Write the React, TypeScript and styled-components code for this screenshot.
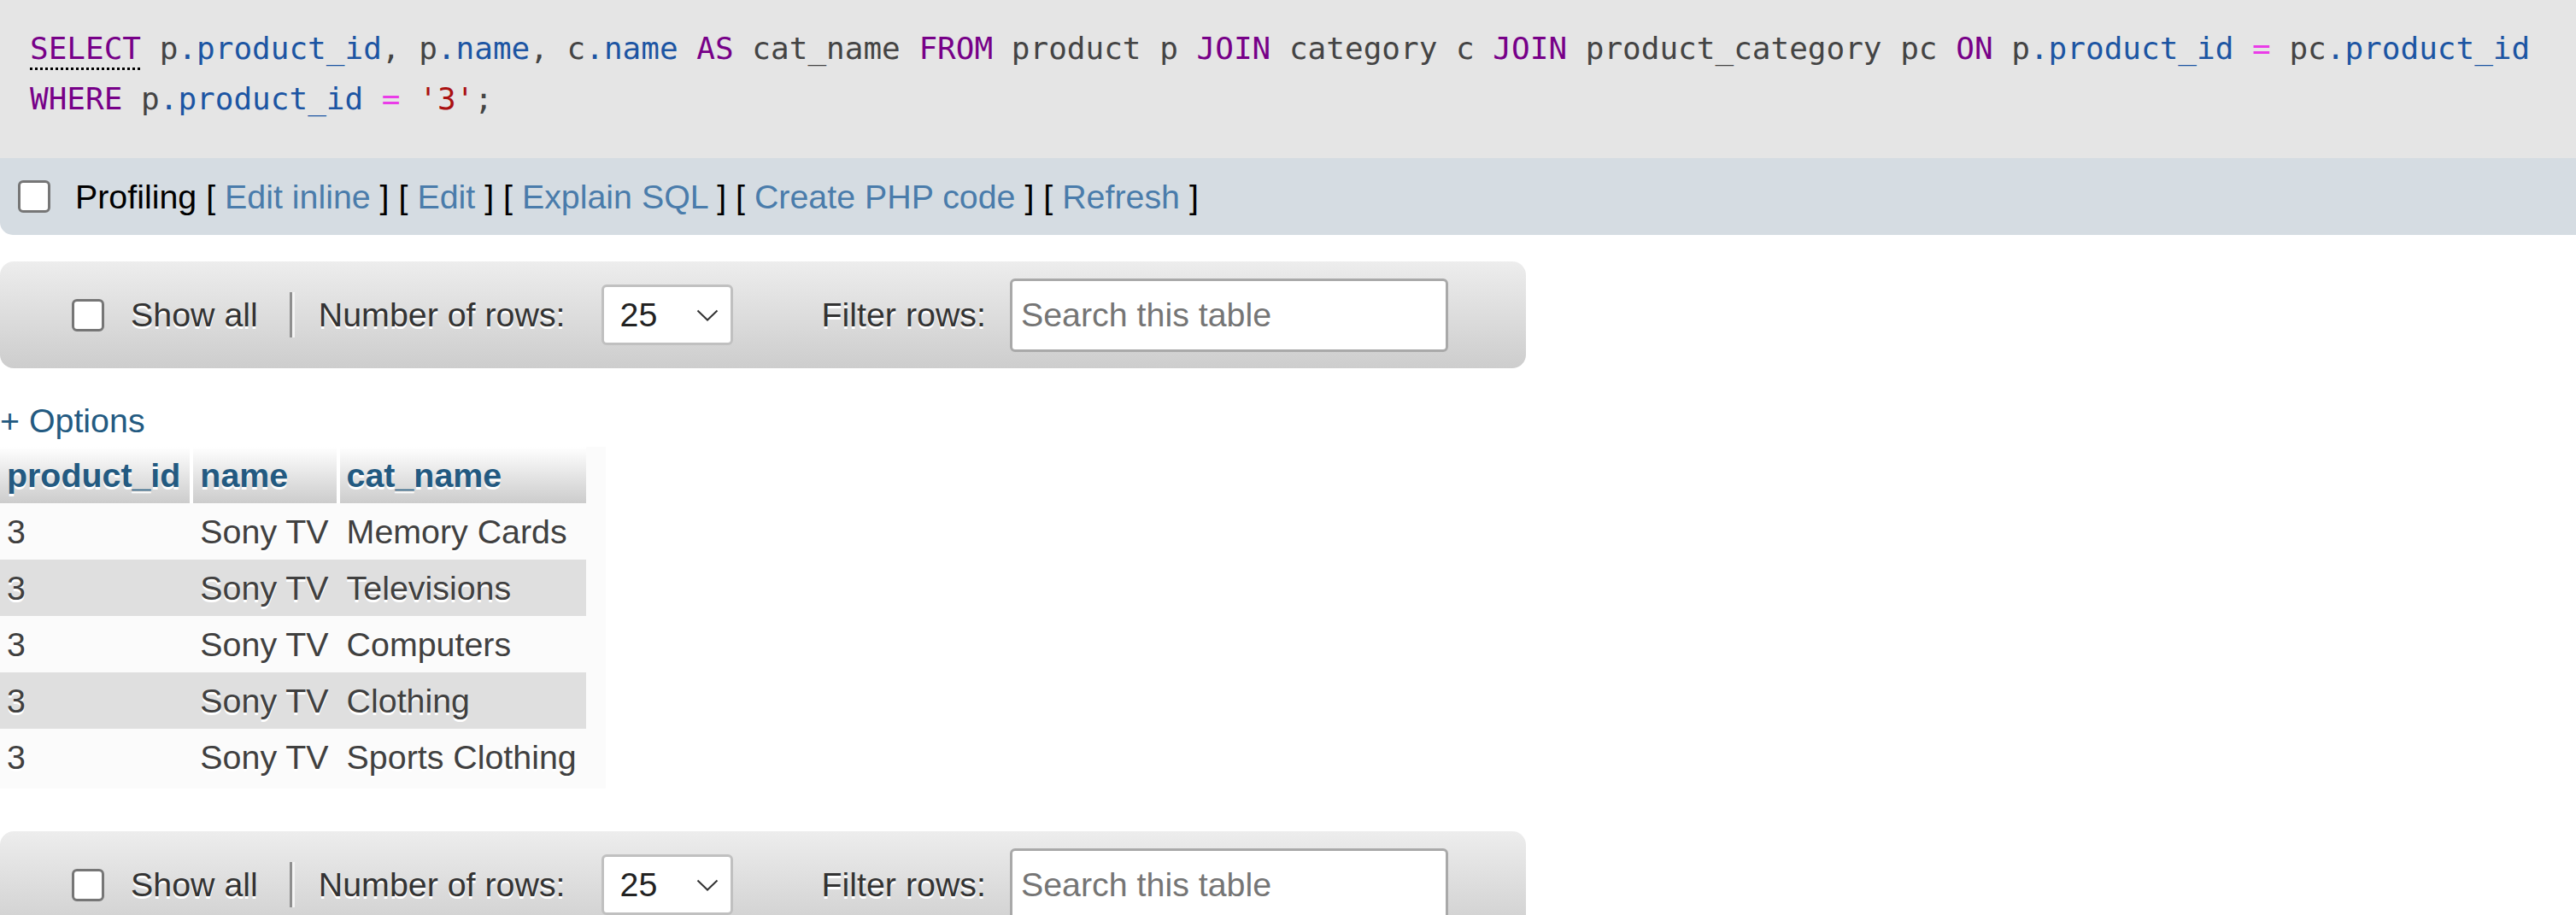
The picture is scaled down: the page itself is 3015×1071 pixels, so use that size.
import React from "react";
import styled, { createGlobalStyle } from "styled-components";

const Global = createGlobalStyle`
  html, body { margin: 0; padding: 0; background: #fff; }
  body {
    font-family: "Liberation Sans", Arial, sans-serif;
    font-size: 39.36px;
    color: #444;
  }
`;

const SqlBox = styled.div`
  background: #e5e5e5;
  height: 185px;
  box-sizing: border-box;
  padding: 27px 20px 0 35px;
`;

const SqlCode = styled.code`
  display: block;
  font-family: "DejaVu Sans Mono", "Liberation Mono", monospace;
  font-size: 36px;
  line-height: 59px;
  color: #444;
  white-space: pre;
`;

type TokKind = "kw" | "var" | "op" | "str" | "plain";
const tokColors: Record<TokKind, string> = {
  kw: "#770088",
  var: "#1c55a3",
  op: "#ea3ce8",
  str: "#aa1111",
  plain: "#444",
};

const Tok = styled.span<{ $k: TokKind; $doc?: boolean }>`
  color: ${(p) => tokColors[p.$k]};
  ${(p) =>
    p.$doc
      ? `text-decoration: underline dotted #000; text-decoration-thickness: 3px; text-underline-offset: 10px;`
      : ""}
`;

const ToolsBar = styled.div`
  background: #d5dce2;
  height: 90px;
  display: flex;
  align-items: center;
  padding-left: 21px;
  border-bottom-left-radius: 15px;
  color: #000;
`;

const CheckBox = styled.span`
  display: inline-block;
  width: 32px;
  height: 32px;
  border: 3px solid #767676;
  border-radius: 6px;
  background: #fff;
  flex: none;
`;

const ToolsText = styled.span`
  margin-left: 29px;
  white-space: pre;
  color: #000;
`;

const ToolLink = styled.a`
  color: #4a7cab;
  text-decoration: none;
`;

const NavBar = styled.div`
  width: 1786px;
  height: 125px;
  box-sizing: border-box;
  border-radius: 16px;
  background: linear-gradient(#ededed, #cdcdcd);
  display: flex;
  align-items: center;
  padding-left: 84px;
  color: #333;
  text-shadow: 0 3px 0 #fff;
`;

const NavSpacer = styled.div<{ $top: number }>`
  margin-top: ${(p) => p.$top}px;
`;

const NavLabel = styled.span<{ $ml: number }>`
  margin-left: ${(p) => p.$ml}px;
  white-space: nowrap;
`;

const Separator = styled.span`
  display: inline-block;
  width: 3px;
  height: 53px;
  background: #8f8f8f;
  box-shadow: 3px 0 0 #f4f4f4;
  margin-left: 37px;
  flex: none;
`;

const SelectBox = styled.div`
  margin-left: 42px;
  width: 154px;
  height: 71px;
  box-sizing: border-box;
  border: 3px solid #c0c0c0;
  border-radius: 6px;
  background: #fff;
  display: flex;
  align-items: center;
  padding-left: 19px;
  padding-right: 14px;
  justify-content: space-between;
  color: #222;
  text-shadow: none;
`;

const SearchInput = styled.input`
  margin-left: 28px;
  width: 513px;
  height: 86px;
  box-sizing: border-box;
  border: 3px solid #a9a9a9;
  border-radius: 6px;
  background: #fff;
  padding: 0 10px;
  font-family: "Liberation Sans", Arial, sans-serif;
  font-size: 39.36px;
  color: #222;
  outline: none;
  &::placeholder {
    color: #757575;
  }
`;

const OptionsLink = styled.a`
  display: block;
  margin: 39px 0 8px;
  line-height: 45px;
  color: #235a81;
  text-decoration: none;
`;

const TableWrap = styled.div`
  display: inline-block;
  background: #fbfbfb;
  padding: 0 23px 4px 0;
  vertical-align: top;
`;

const Table = styled.table`
  border-collapse: collapse;
  font-size: 39.36px;
`;

const Th = styled.th<{ $last?: boolean }>`
  background: linear-gradient(#fff, #cccccc);
  color: #235a81;
  font-weight: bold;
  text-align: left;
  padding: 10px 11px 10px 8px;
  line-height: 46px;
  text-shadow: 0 3px 0 #fff;
  border-right: ${(p) => (p.$last ? "none" : "4px solid #fff")};
  white-space: nowrap;
`;

const Tr = styled.tr<{ $even: boolean }>`
  background: ${(p) => (p.$even ? "#dfdfdf" : "transparent")};
`;

const Td = styled.td<{ $first?: boolean }>`
  padding: ${(p) => (p.$first ? "10px 11px 10px 8px" : "10px 11px 10px 10px")};
  line-height: 46px;
  color: #404040;
  text-shadow: 0 3px 0 #fff;
  white-space: nowrap;
  vertical-align: top;
`;

const Chevron = () => (
  <svg width="26" height="14" viewBox="0 0 26 14" fill="none">
    <path d="M1.5 1.5 L13 12.5 L24.5 1.5" stroke="#333" strokeWidth="2" />
  </svg>
);

const Navigation: React.FC = () => (
  <NavBar>
    <CheckBox />
    <NavLabel $ml={31}>Show all</NavLabel>
    <Separator />
    <NavLabel $ml={31}>Number of rows:</NavLabel>
    <SelectBox>
      <span>25</span>
      <Chevron />
    </SelectBox>
    <NavLabel $ml={104}>Filter rows:</NavLabel>
    <SearchInput placeholder="Search this table" />
  </NavBar>
);

const rows = [
  ["3", "Sony TV", "Memory Cards"],
  ["3", "Sony TV", "Televisions"],
  ["3", "Sony TV", "Computers"],
  ["3", "Sony TV", "Clothing"],
  ["3", "Sony TV", "Sports Clothing"],
];

export default function App() {
  return (
    <>
      <Global />
      <SqlBox>
        <SqlCode>
          <Tok $k="kw" $doc>SELECT</Tok>
          <Tok $k="plain"> p</Tok>
          <Tok $k="var">.product_id</Tok>
          <Tok $k="plain">, p</Tok>
          <Tok $k="var">.name</Tok>
          <Tok $k="plain">, c</Tok>
          <Tok $k="var">.name</Tok> <Tok $k="kw">AS</Tok>
          <Tok $k="plain"> cat_name </Tok>
          <Tok $k="kw">FROM</Tok>
          <Tok $k="plain"> product p </Tok>
          <Tok $k="kw">JOIN</Tok>
          <Tok $k="plain"> category c </Tok>
          <Tok $k="kw">JOIN</Tok>
          <Tok $k="plain"> product_category pc </Tok>
          <Tok $k="kw">ON</Tok>
          <Tok $k="plain"> p</Tok>
          <Tok $k="var">.product_id</Tok> <Tok $k="op">=</Tok>
          <Tok $k="plain"> pc</Tok>
          <Tok $k="var">.product_id</Tok>
          {"\n"}
          <Tok $k="kw">WHERE</Tok>
          <Tok $k="plain"> p</Tok>
          <Tok $k="var">.product_id</Tok> <Tok $k="op">=</Tok>{" "}
          <Tok $k="str">'3'</Tok>
          <Tok $k="plain">;</Tok>
        </SqlCode>
      </SqlBox>
      <ToolsBar>
        <CheckBox />
        <ToolsText>
          Profiling [ <ToolLink>Edit inline</ToolLink> ] [ <ToolLink>Edit</ToolLink> ] [{" "}
          <ToolLink>Explain SQL</ToolLink> ] [ <ToolLink>Create PHP code</ToolLink> ] [{" "}
          <ToolLink>Refresh</ToolLink> ]
        </ToolsText>
      </ToolsBar>
      <NavSpacer $top={31}>
        <Navigation />
      </NavSpacer>
      <OptionsLink>+ Options</OptionsLink>
      <TableWrap>
        <Table>
          <thead>
            <tr>
              <Th>product_id</Th>
              <Th>name</Th>
              <Th $last>cat_name</Th>
            </tr>
          </thead>
          <tbody>
            {rows.map((r, i) => (
              <Tr key={i} $even={i % 2 === 1}>
                {r.map((c, j) => (
                  <Td key={j} $first={j === 0}>
                    {c}
                  </Td>
                ))}
              </Tr>
            ))}
          </tbody>
        </Table>
      </TableWrap>
      <NavSpacer $top={50}>
        <Navigation />
      </NavSpacer>
    </>
  );
}
